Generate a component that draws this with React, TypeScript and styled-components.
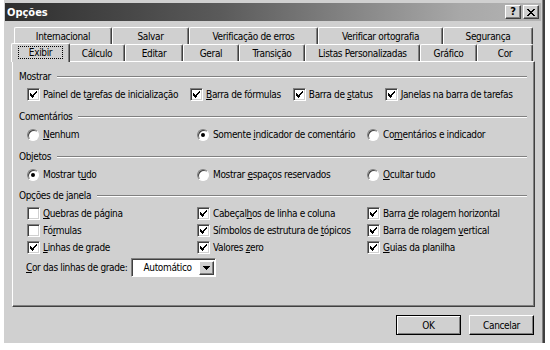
import React from 'react';
import styled, { createGlobalStyle } from 'styled-components';

const GlobalStyle = createGlobalStyle`
    html, body {
        margin: 0;
        padding: 0;
        background: #ffffff;
    }
    body {
        font-family: "DejaVu Sans Condensed", "Liberation Sans", sans-serif;
        font-size: 10px;
        letter-spacing: -0.35px;
        color: #000;
    }
`;

const FACE = '#d0d0d0';
const SHADOW = '#808080';
const DARK = '#404040';

// window shell
const Dialog = styled.div`
    width: 538px;
    height: 340px;
    margin-left: 4px;
    padding: 3px 0 0 0;
    background: ${FACE};
    border-right: 1px solid ${SHADOW};
    box-shadow: 1px 0 0 ${DARK}, 2px 0 0 ${DARK};
    display: flex;
    flex-direction: column;
`;

const TitleBar = styled.div`
    height: 18px;
    margin: 0 1px 0 1px;
    background: linear-gradient(90deg, #2e2e2e 0%, #5a5a5a 40%, #a8a8a8 85%, #b4b4b4 100%);
    display: flex;
    align-items: center;
    padding: 0 2px 0 2px;
`;

const TitleText = styled.div`
    flex: 1;
    color: #fff;
    font-weight: bold;
    font-size: 11px;
    letter-spacing: 0;
`;

const CaptionButton = styled.div<{ $gap?: number }>`
    width: 14px;
    height: 12px;
    margin-left: ${p => p.$gap ?? 0}px;
    background: ${FACE};
    border-top: 1px solid #fff;
    border-left: 1px solid #fff;
    border-right: 1px solid ${DARK};
    border-bottom: 1px solid ${DARK};
    box-shadow: inset -1px -1px 0 ${SHADOW};
    display: flex;
    align-items: center;
    justify-content: center;
    font-weight: bold;
    font-size: 11px;
    line-height: 12px;
`;

const Body = styled.div`
    flex: 1;
    display: flex;
    flex-direction: column;
    padding: 6px 7px 0 8px;
`;

// tabs
const TabRow = styled.div<{ $indent: number }>`
    display: flex;
    height: 17px;
    padding-left: ${p => p.$indent}px;
    align-items: flex-end;
    position: relative;
    z-index: 1;
`;

const Tab = styled.div<{ $w: number; $active?: boolean }>`
    box-sizing: border-box;
    width: ${p => p.$w + (p.$active ? 2 : 0)}px;
    height: ${p => (p.$active ? 19 : 17)}px;
    margin: 0 ${p => (p.$active ? -1 : 0)}px ${p => (p.$active ? -1 : 0)}px;
    position: relative;
    z-index: ${p => (p.$active ? 2 : 1)};
    background: ${FACE};
    border-top: 1px solid #fff;
    border-left: 1px solid #fff;
    border-right: 1px solid ${DARK};
    border-radius: 2px 2px 0 0;
    box-shadow: inset -1px 0 0 ${SHADOW};
    display: flex;
    align-items: center;
    justify-content: center;
    padding-bottom: ${p => (p.$active ? 2 : 0)}px;
    white-space: nowrap;
`;

const FocusLabel = styled.span`
    outline: 1px dotted #000;
    padding: 0 10px;
    line-height: 11px;
`;

// tab page
const Panel = styled.div`
    box-sizing: border-box;
    height: 246px;
    width: 523px;
    border-top: 1px solid #fff;
    border-left: 1px solid #fff;
    border-right: 1px solid ${DARK};
    border-bottom: 1px solid ${DARK};
    box-shadow: inset -1px -1px 0 ${SHADOW};
    padding: 8px 7px 0 6px;
    display: flex;
    flex-direction: column;
`;

const GroupHeader = styled.div<{ $top: number }>`
    display: flex;
    align-items: center;
    height: 13px;
    margin-top: ${p => p.$top}px;
    margin-bottom: 5px;
`;

const GroupLine = styled.div`
    flex: 1;
    margin-left: 6px;
    border-top: 1px solid ${SHADOW};
    border-bottom: 1px solid #fff;
`;

const FlowRow = styled.div`
    display: flex;
    padding-left: 8px;
    height: 13px;
    align-items: center;
    gap: 12px;
`;

const OptionGrid = styled.div`
    display: grid;
    grid-template-columns: 170px 170px auto;
    grid-auto-rows: 17px;
    padding-left: 8px;
    align-items: start;
`;

const Option = styled.label`
    display: flex;
    align-items: center;
    height: 13px;
    white-space: nowrap;
`;

const CheckBox = styled.span`
    box-sizing: border-box;
    width: 13px;
    height: 13px;
    margin-right: 3px;
    background: #fff;
    border-top: 1px solid ${SHADOW};
    border-left: 1px solid ${SHADOW};
    border-right: 1px solid #fff;
    border-bottom: 1px solid #fff;
    box-shadow: inset 1px 1px 0 ${DARK}, inset -1px -1px 0 ${FACE};
    display: flex;
    align-items: center;
    justify-content: center;
    flex: none;
`;

const RadioCircle = styled.span`
    box-sizing: border-box;
    width: 12px;
    height: 12px;
    margin-right: 4px;
    border-radius: 50%;
    background: #fff;
    border: 1px solid;
    border-color: ${SHADOW} #fff #fff ${SHADOW};
    box-shadow: inset 1px 1px 0 ${DARK};
    display: flex;
    align-items: center;
    justify-content: center;
    flex: none;
`;

const Dot = styled.span`
    width: 4px;
    height: 4px;
    border-radius: 50%;
    background: #000;
`;

const ColorRow = styled.div`
    display: flex;
    align-items: center;
    height: 18px;
    padding-left: 7px;
`;

const Select = styled.div`
    box-sizing: border-box;
    width: 85px;
    height: 19px;
    margin-left: 3px;
    background: #fff;
    border-top: 1px solid ${SHADOW};
    border-left: 1px solid ${SHADOW};
    border-right: 1px solid #fff;
    border-bottom: 1px solid #fff;
    box-shadow: inset 1px 1px 0 ${DARK};
    display: flex;
    align-items: stretch;
    padding: 2px 1px 1px 2px;
`;

const SelectText = styled.div`
    flex: 1;
    display: flex;
    align-items: center;
    padding-left: 10px;
`;

const DropButton = styled.div`
    box-sizing: border-box;
    width: 15px;
    background: ${FACE};
    border-top: 1px solid #fff;
    border-left: 1px solid #fff;
    border-right: 1px solid ${DARK};
    border-bottom: 1px solid ${DARK};
    box-shadow: inset -1px -1px 0 ${SHADOW};
    display: flex;
    align-items: center;
    justify-content: center;
`;

const Footer = styled.div`
    display: flex;
    justify-content: flex-end;
    gap: 8px;
    margin-top: 8px;
    padding-right: 1px;
`;

const PushButton = styled.div<{ $default?: boolean }>`
    box-sizing: border-box;
    width: 65px;
    height: 20px;
    background: ${FACE};
    border: 1px solid;
    border-color: ${p => (p.$default ? '#000' : '#fff')} #000 #000 ${p => (p.$default ? '#000' : '#fff')};
    box-shadow: ${p =>
        p.$default
            ? `inset 1px 1px 0 #fff, inset -1px -1px 0 ${SHADOW}`
            : `inset -1px -1px 0 ${SHADOW}`};
    display: flex;
    align-items: center;
    justify-content: center;
`;

const Check = () => (
    <svg width="7" height="7" viewBox="0 0 7 7" shapeRendering="crispEdges">
        <path d="M0 2h1v1h-1zM0 3h2v1h-2zM0 4h3v1h-3zM1 5h3v1h-3zM2 6h1v1h-1z" fill="#000" />
        <path d="M6 0h1v1h-1zM5 1h2v1h-2zM4 2h2v1h-2zM3 3h2v1h-2zM3 4h1v1h-1z" fill="#000" />
    </svg>
);

const Arrow = () => (
    <svg width="7" height="4" viewBox="0 0 7 4" shapeRendering="crispEdges">
        <path d="M0 0h7v1h-7zM1 1h5v1h-5zM2 2h3v1h-3zM3 3h1v1h-1z" fill="#000" />
    </svg>
);

type Opt = { label: React.ReactNode; on?: boolean };

const CheckOption = ({ label, on }: Opt) => (
    <Option>
        <CheckBox>{on && <Check />}</CheckBox>
        <span>{label}</span>
    </Option>
);

const RadioOption = ({ label, on }: Opt) => (
    <Option>
        <RadioCircle>{on && <Dot />}</RadioCircle>
        <span>{label}</span>
    </Option>
);

const backTabs = [
    { t: 'Internacional', w: 98 },
    { t: 'Salvar', w: 77 },
    { t: 'Verificação de erros', w: 129 },
    { t: 'Verificar ortografia', w: 125 },
    { t: 'Segurança', w: 90 },
];

const frontTabs = [
    { t: 'Cálculo', w: 56 },
    { t: 'Editar', w: 58 },
    { t: 'Geral', w: 56 },
    { t: 'Transição', w: 66 },
    { t: 'Listas Personalizadas', w: 115 },
    { t: 'Gráfico', w: 57 },
    { t: 'Cor', w: 56 },
];

export default function App() {
    return (
        <>
            <GlobalStyle />
            <Dialog>
                <TitleBar>
                    <TitleText>Opções</TitleText>
                    <CaptionButton>?</CaptionButton>
                    <CaptionButton $gap={2}>
                        <svg width="8" height="7" viewBox="0 0 8 7" shapeRendering="crispEdges">
                            <path d="M0 0h2v1h-2zM6 0h2v1h-2zM1 1h2v1h-2zM5 1h2v1h-2zM2 2h4v1h-4zM3 3h2v1h-2zM2 4h4v1h-4zM1 5h2v1h-2zM5 5h2v1h-2zM0 6h2v1h-2zM6 6h2v1h-2z" fill="#000" />
                        </svg>
                    </CaptionButton>
                </TitleBar>
                <Body>
                    <TabRow $indent={2}>
                        {backTabs.map(b => (
                            <Tab key={b.t} $w={b.w}>{b.t}</Tab>
                        ))}
                    </TabRow>
                    <TabRow $indent={0}>
                        <Tab $w={57} $active>
                            <FocusLabel>Exibir</FocusLabel>
                        </Tab>
                        {frontTabs.map(f => (
                            <Tab key={f.t} $w={f.w}>{f.t}</Tab>
                        ))}
                    </TabRow>
                    <Panel>
                        <GroupHeader $top={0}>
                            Mostrar<GroupLine />
                        </GroupHeader>
                        <FlowRow>
                            <CheckOption on label={<>Painel de t<u>a</u>refas de inicialização</>} />
                            <CheckOption on label={<><u>B</u>arra de fórmulas</>} />
                            <CheckOption on label={<>Barra de <u>s</u>tatus</>} />
                            <CheckOption on label={<><u>J</u>anelas na barra de tarefas</>} />
                        </FlowRow>

                        <GroupHeader $top={9}>
                            Comentários<GroupLine />
                        </GroupHeader>
                        <OptionGrid>
                            <RadioOption label={<><u>N</u>enhum</>} />
                            <RadioOption on label={<>Somente <u>i</u>ndicador de comentário</>} />
                            <RadioOption label={<>Co<u>m</u>entários e indicador</>} />
                        </OptionGrid>

                        <GroupHeader $top={5}>
                            Objetos<GroupLine />
                        </GroupHeader>
                        <OptionGrid>
                            <RadioOption on label={<>Mostrar t<u>u</u>do</>} />
                            <RadioOption label={<>Mostrar <u>e</u>spaços reservados</>} />
                            <RadioOption label={<><u>O</u>cultar tudo</>} />
                        </OptionGrid>

                        <GroupHeader $top={4}>
                            Opções de janela<GroupLine />
                        </GroupHeader>
                        <OptionGrid>
                            <CheckOption label={<><u>Q</u>uebras de página</>} />
                            <CheckOption on label={<>Cabeçal<u>h</u>os de linha e coluna</>} />
                            <CheckOption on label={<>Barra <u>d</u>e rolagem horizontal</>} />
                            <CheckOption label={<>Fó<u>r</u>mulas</>} />
                            <CheckOption on label={<>Símbolos de estrutura de <u>t</u>ópicos</>} />
                            <CheckOption on label={<>Barra de rolagem <u>v</u>ertical</>} />
                            <CheckOption on label={<><u>L</u>inhas de grade</>} />
                            <CheckOption on label={<>Valores <u>z</u>ero</>} />
                            <CheckOption on label={<><u>G</u>uias da planilha</>} />
                        </OptionGrid>
                        <ColorRow>
                            <span><u>C</u>or das linhas de grade:</span>
                            <Select>
                                <SelectText>Automático</SelectText>
                                <DropButton>
                                    <Arrow />
                                </DropButton>
                            </Select>
                        </ColorRow>
                    </Panel>
                    <Footer>
                        <PushButton $default>OK</PushButton>
                        <PushButton>Cancelar</PushButton>
                    </Footer>
                </Body>
            </Dialog>
        </>
    );
}
